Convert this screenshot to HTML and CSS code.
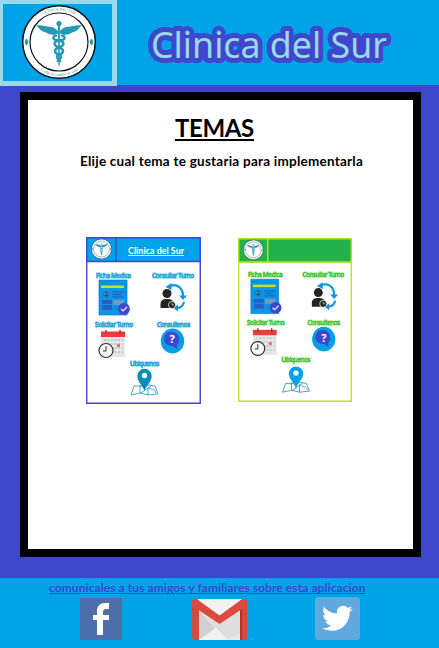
FILE: index.html
```html
<!DOCTYPE html>
<html lang="es">
<head>
<meta charset="utf-8">
<title>Clinica del Sur</title>
<link rel="stylesheet" href="styles.css">
</head>
<body>
<svg class="defs" aria-hidden="true">
  <symbol id="logo" viewBox="0 0 76 76">
    <circle cx="38" cy="38" r="36.300" fill="#fff" stroke="#111" stroke-width="1.500"/>
    <circle cx="38" cy="38" r="29" fill="#fff" stroke="#111" stroke-width="1.200"/>
    <path d="M5.500 35l1.500 3-1.500 3-1.500-3zM70.500 35l1.500 3-1.500 3-1.500-3z" fill="#1696b8" stroke="#1696b8"/>
    <g fill="#2899b5">
      <circle cx="38" cy="19.500" r="2.600"/>
      <path d="M37 22h2l-.3 39-.7 1.500-.7-1.500z"/>
      <path d="M37 27c-4-5-9-4-13-5-3-.8-6-1.200-9-.5 2 1.500 3 2.500 4 4 2 2 4 2.500 6 3 3 2 6 2.500 9 2l3-1zM39 27c4-5 9-4 13-5 3-.8 6-1.200 9-.5-2 1.500-3 2.500-4 4-2 2-4 2.500-6 3-3 2-6 2.500-9 2l-3-1z"/>
    </g>
    <path d="M36 32c-4-2-5 4-1 4s9 2 7 5-8 2-8 6 6 3 6 6-4 2-3 5M40 32c4-2 5 4 1 4s-9 2-7 5 8 2 8 6-6 3-6 6 4 2 3 5" fill="none" stroke="#2899b5" stroke-width="2.500"/>
  </symbol>
  <symbol id="icons" viewBox="0 0 115 167">
    <g>
      <path d="M13 43h28v35H13z" fill="#0797e8" stroke="#1675bd" stroke-width=".7"/>
      <path d="M15 48.500h23v2.500H15z" fill="#d9d920"/>
      <path d="M14 45.200h8" stroke="#1675bd" stroke-dasharray="1 1"/>
      <circle cx="20.500" cy="57" r="2.700" fill="#52b1e5" stroke="#234c8c" stroke-width=".8"/>
      <path d="M18.500 59c0-2 4-2 4 0zM20.500 55a1.200 1.200 0 1 0 .1 0z" fill="#234c8c"/>
      <path d="M26 55h12M27 57.500h8M26 60h12" stroke="#2459b5"/>
      <path d="M16 63h10v4H16zM16 68h10v5H16z" fill="#2a60c4"/>
      <path d="M27 63h11v5H27z" fill="#719ac0"/>
      <path d="M27 70h6M27 72h6" stroke="#3e78c8"/>
      <circle cx="38" cy="72" r="5.900" fill="#3f48cc"/>
      <path d="M35 72l2 2 4-4" fill="none" stroke="#e9efff" stroke-width="1.200"/>
    </g>
    <g>
      <g fill="none" stroke="#0797e0" stroke-width="2.200">
        <path d="M84 49c7-3 13 2 13 10"/>
        <path d="M91 71c3 0 6-2 7-6"/>
      </g>
      <path d="M79.500 50l6-4v7zM93 58.500h8l-4 4.500zM87.500 71l4.500-3.500v7z" fill="#0797e0"/>
      <circle cx="81" cy="56.500" r="4.500" fill="#242424"/>
      <path d="M74.500 71v-4c0-4 3-5 6.500-5s7 1 7 5v4z" fill="#242424"/>
      <circle cx="86" cy="68" r="3.600" fill="#242424" stroke="#fff" stroke-width=".7"/>
      <path d="M86 66v2h2" fill="none" stroke="#9bd8f4" stroke-width=".8"/>
    </g>
    <g>
      <path d="M15 95h24v25H15z" fill="#e4e6e8"/>
      <path d="M15 94.500h24v5.500H15z" fill="#ee3b3d"/>
      <path d="M20 93v4M34 93v4" stroke="#8c3435" stroke-width="1.300"/>
      <path d="M18 103h19M18 107h19M18 111h19M18 115h19" stroke="#c6cace" stroke-width="1.800" stroke-dasharray="2 1.500"/>
      <path d="M31 107h3v3h-3z" fill="#ee6c6c"/>
      <circle cx="20" cy="113.500" r="7" fill="#f7f7f7" stroke="#303030" stroke-width="1.200"/>
      <path d="M20 109v5h-3" fill="none" stroke="#303030"/>
    </g>
    <g>
      <ellipse cx="86.500" cy="104" rx="11.700" ry="12.500" fill="#009fe5"/>
      <path d="M80 97c3-4 13-3 13 5 0 4-1 5-2 6v4l-4-3c-10 0-10-8-7-12z" fill="#3f48cc"/>
    </g>
    <g>
      <path d="M48 149l-3 9 9-2 8 2 10-1-3-8-7-1-5 1zM54 148v8M62 151v7M55 156l10-7M62 150c3 4 6 0 8 6" fill="none" stroke="#218cbd" stroke-width=".8"/>
      <path d="M58.500 154c-2-6-7.200-9-7.200-15a7.200 7.200 0 0 1 14.400 0c0 6-5.200 9-7.200 15z" fill="currentColor"/>
      <circle cx="58.500" cy="138.500" r="2.700" fill="#fff"/>
    </g>
  </symbol>
</svg>

<header class="header">
  <div class="brand">
    <svg class="brand-logo" viewBox="0 0 76 76">
      <defs>
        <path id="arc-top" d="M6.500 38a31.500 31.500 0 0 1 63 0"/>
        <path id="arc-bottom" d="M4 38a34 34 0 0 0 68 0"/>
      </defs>
      <use href="#logo"/>
      <text class="ring"><textPath href="#arc-top" startOffset="50%">CLINICA DEL SUR</textPath></text>
      <text class="ring"><textPath href="#arc-bottom" startOffset="50%">Cuidar la calidad de vida</textPath></text>
    </svg>
  </div>
  <svg class="title" viewBox="0 0 322 85">
    <text x="34" y="57.500" textLength="236" lengthAdjust="spacingAndGlyphs">Clinica del Sur</text>
  </svg>
</header>

<main class="panel">
  <h1>TEMAS</h1>
  <p class="lead">Elije cual tema te gustaria para implementarla</p>
  <div class="themes">
    <svg class="theme theme-blue" viewBox="0 0 115 167" preserveAspectRatio="none">
      <path class="bar" d="M0 0h115v25H0z"/>
      <path class="frame" d="M.75 .75h113.500v165.500H.75zM0 24.500h115M30 0v25"/>
      <use href="#logo" x="5" y="1.500" width="21" height="21"/>
      <text class="theme-name" x="42" y="16.500" textLength="56" lengthAdjust="spacingAndGlyphs">Clinica del Sur</text>
      <path d="M42 18.500h56" stroke="#fff" stroke-width=".8"/>
      <g class="labels">
        <text x="10" y="40.500" textLength="35">Ficha Medica</text>
        <text x="66" y="40.500" textLength="42">Consultar Turno</text>
        <text x="9" y="89.500" textLength="38">Solicitar Turno</text>
        <text x="71" y="89.500" textLength="33">Consultenos</text>
        <text x="44" y="128.500" textLength="29">Ubiquenos</text>
      </g>
      <use href="#icons" width="115" height="167"/>
      <text class="question" x="83.500" y="106">?</text>
    </svg>
    <svg class="theme theme-green" viewBox="0 0 115 167" preserveAspectRatio="none">
      <path class="bar" d="M0 0h115v25H0z"/>
      <path class="frame" d="M.75 .75h113.500v165.500H.75zM0 24.500h115M30 0v25"/>
      <use href="#logo" x="5" y="1.500" width="21" height="21"/>
      <g class="labels">
        <text x="10" y="39.500" textLength="35">Ficha Medica</text>
        <text x="65" y="39.500" textLength="42">Consultar Turno</text>
        <text x="9" y="89" textLength="38">Solicitar Turno</text>
        <text x="70" y="89" textLength="33">Consultenos</text>
        <text x="44" y="126.500" textLength="29">Ubiquenos</text>
      </g>
      <use href="#icons" y="-1" width="115" height="167"/>
      <text class="question" x="84" y="106">?</text>
    </svg>
  </div>
</main>

<footer class="footer">
  <a class="share">comunicales a tus amigos y familiares sobre esta aplicacion</a>
  <div class="social">
    <svg class="facebook" viewBox="0 0 42 42">
      <path fill="#4c6eaa" d="M0 0h42v42H0z"/>
      <path fill="#fff" d="M17 37V22h-4v-5h4v-4c0-5 3-8 8-8h4v6h-3c-2 0-3 1-3 3v3h6v5h-6v15z"/>
    </svg>
    <svg class="gmail" viewBox="0 0 55 41">
      <rect width="55" height="41" rx="3" fill="#d54a40"/>
      <path fill="#e7e7e7" d="M7 0h41v41H7z"/>
      <path fill="#d0d0d0" d="M7 12l17 18L7 41z"/>
      <path fill="#dedede" d="M7 12l20 13 21-13v22L34 41H7l16-12z"/>
      <path fill="#f1f1f1" d="M7 41l17-12 12 12zM5 0h45L27.500 17z"/>
      <path fill="#dc4a3f" d="M0 3C0 0 4-1 6 1l21.500 15.500L49 1c3-2 6 0 6 3 0 2-1 3-2 4L27.500 25 2 8C1 7 0 5 0 3z"/>
      <path fill="#b83228" d="M48 11l2-1v31h-2z"/>
    </svg>
    <svg class="twitter" viewBox="0 0 45 43">
      <rect width="45" height="43" rx="3" fill="#60a8de"/>
      <path fill="#fff" transform="translate(7 6) scale(1.280)" d="M23.950 4.570a10 10 0 0 1-2.820.77 4.960 4.960 0 0 0 2.160-2.720c-.95.550-2 .95-3.130 1.180a4.920 4.920 0 0 0-8.380 4.480C7.690 8.090 4.070 6.130 1.640 3.160a4.820 4.820 0 0 0-.67 2.480c0 1.710.87 3.210 2.190 4.100a4.900 4.900 0 0 1-2.230-.62v.06a4.920 4.920 0 0 0 3.950 4.830 5 5 0 0 1-2.210.08 4.940 4.940 0 0 0 4.600 3.420A9.870 9.870 0 0 1 0 19.540a13.990 13.990 0 0 0 7.560 2.210c9.050 0 14-7.500 14-13.980 0-.21 0-.42-.02-.63a9.940 9.940 0 0 0 2.410-2.570z"/>
    </svg>
  </div>
</footer>
</body>
</html>
```
FILE: styles.css
```css
* { box-sizing: border-box; }
body {
  margin: 0;
  height: 648px;
  display: flex;
  flex-direction: column;
  background: #3f48cc;
  font-family: Lato, "Liberation Sans", sans-serif;
  overflow: hidden;
}
.defs { width: 0; height: 0; position: absolute; }

.header { height: 85px; flex: none; display: flex; background: #00a2e8; }
.brand {
  width: 117px;
  height: 86px;
  flex: none;
  padding-left: 17.500px;
  border: solid #99d9ea;
  border-width: 4px 5px 5px 3px;
  background: #00a2e8;
}
.brand-logo { display: block; width: 76px; height: 76px; overflow: visible; }
.ring { font: 4px "Liberation Serif", serif; fill: #1b94b8; text-anchor: middle; }
.title { width: 322px; height: 85px; }
.title text {
  font: 37px "Noto Sans", sans-serif;
  fill: #99d9ea;
  stroke: #3f48cc;
  stroke-width: 10px;
  stroke-linejoin: round;
  paint-order: stroke;
}

.panel {
  width: 401px;
  height: 465px;
  flex: none;
  margin: 7px 0 21px 20px;
  border: 8px solid #000;
  background: #fff;
  display: flex;
  flex-direction: column;
  align-items: center;
}
h1 {
  margin: 14px 12px 0 0;
  font-size: 24px;
  line-height: 28px;
  font-weight: 700;
  border-bottom: 2px solid #000;
  height: 27px;
  width: 79px;
  letter-spacing: -0.400px;
  white-space: nowrap;
}
.lead {
  margin: 12px 0 0 2px;
  font-size: 13.500px;
  line-height: 16px;
  font-weight: 700;
  letter-spacing: 0.240px;
  white-space: nowrap;
}
.themes { width: 100%; display: flex; align-items: flex-start; gap: 37px; margin: 68px 0 0; padding-left: 58px; }
.theme { display: block; }
.theme-blue { width: 115px; height: 167px; color: #078dba; --bar: #00a2e8; --line: #3f48cc; --label: #078fc4; --halo: #62c3ee; }
.theme-green { width: 114px; height: 164px; margin-top: 1px; color: #00a2e8; --bar: #22b14c; --line: #b5e61d; --label: #18a83c; --halo: #8be468; }
.bar { fill: var(--bar); }
.frame { fill: none; stroke: var(--line); stroke-width: 1.400; }
.theme-name { font: 700 9.500px Lato, sans-serif; fill: #fff; }
.labels text { font: 6.500px "Noto Sans", sans-serif; fill: var(--label); stroke: var(--halo); stroke-width: 1.200px; paint-order: stroke; }
.question { font: 700 11px "Noto Sans", sans-serif; fill: #fff; }

.footer { height: 70px; flex: none; background: #00a2e8; }
.share {
  display: block;
  width: 316px;
  height: 16px;
  margin-left: 49px;
  padding-top: 2px;
  font-size: 12px;
  line-height: 16px;
  font-weight: 700;
  letter-spacing: 0.080px;
  color: #3f48cc;
  border-bottom: 1px solid #3f48cc;
  white-space: nowrap;
}
.social { display: flex; align-items: flex-end; margin: 3px 0 0 80px; height: 43px; }
.facebook { width: 42px; height: 42px; }
.gmail { width: 55px; height: 41px; margin-left: 70px; }
.twitter { width: 45px; height: 43px; margin-left: 68px; }
```
